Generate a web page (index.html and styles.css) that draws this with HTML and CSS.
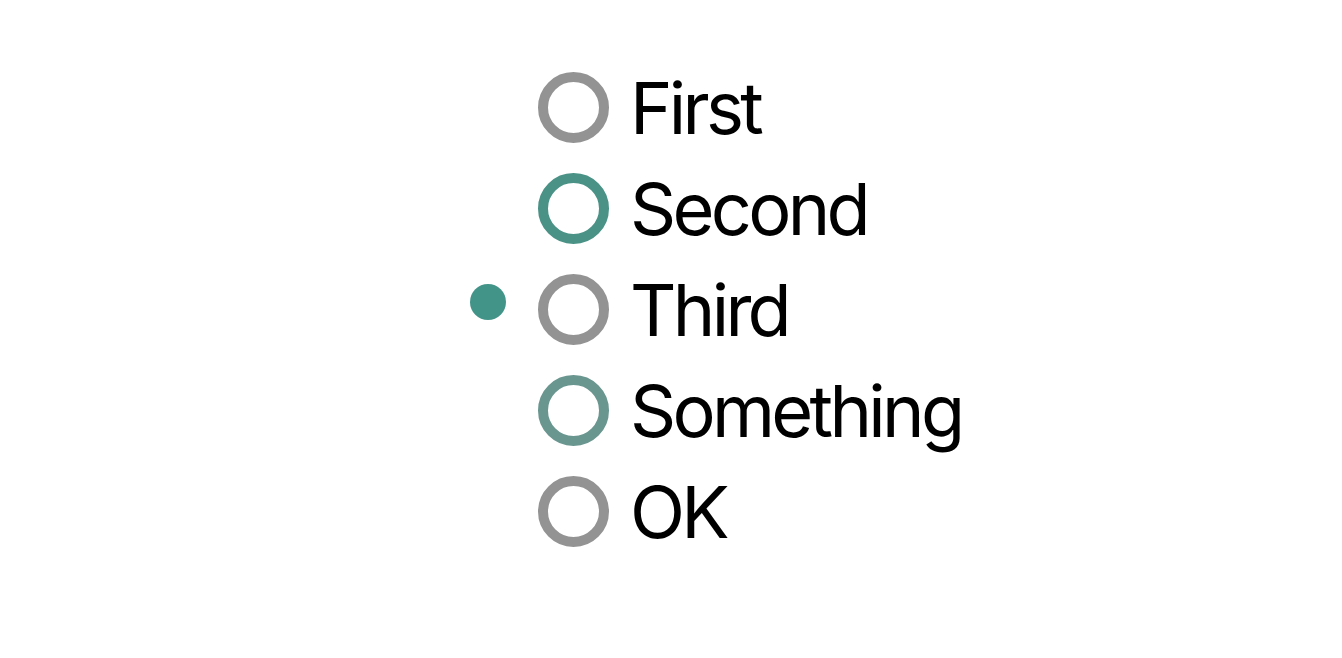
FILE: index.html
```html
<!DOCTYPE html>
<html lang="en">
<head>
  <meta charset="UTF-8" />
  <title>Radio list</title>
  <link rel="stylesheet" href="styles.css">
</head>
<body>
  <main>
    <ul class="options" role="radiogroup">
      <li class="option"><span class="marker"></span><span class="radio"></span><span class="label">First</span></li>
      <li class="option focus"><span class="marker"></span><span class="radio"></span><span class="label">Second</span></li>
      <li class="option selected"><span class="marker"></span><span class="radio"></span><span class="label">Third</span></li>
      <li class="option hover"><span class="marker"></span><span class="radio"></span><span class="label">Something</span></li>
      <li class="option"><span class="marker"></span><span class="radio"></span><span class="label">OK</span></li>
    </ul>
  </main>
</body>
</html>
```

FILE: styles.css
```css
:root {
  --ring: #939393;
  --teal: #4a9286;
  --teal-soft: #6a9690;
  --dot: #429488;
}
* {
  box-sizing: border-box;
  margin: 0;
  padding: 0;
}
body {
  background: #fff;
  color: #000;
  font-family: Inter, "Noto Sans", sans-serif;
}
.options {
  list-style: none;
  padding: 57px 0 0 470px;
}
.option {
  display: flex;
  align-items: center;
  height: 101px;
}
.marker {
  width: 36px;
  height: 36px;
  margin-right: 32px;
  margin-top: -15px;
  border-radius: 50%;
}
.selected .marker {
  background: var(--dot);
}
.radio {
  width: 71px;
  height: 71px;
  border: 10px solid var(--ring);
  border-radius: 50%;
  margin-right: 21px;
}
.focus .radio {
  border-color: var(--teal);
}
.hover .radio {
  border-color: var(--teal-soft);
}
.label {
  font-size: 72px;
  line-height: 1;
  letter-spacing: -3.7px;
}
```
